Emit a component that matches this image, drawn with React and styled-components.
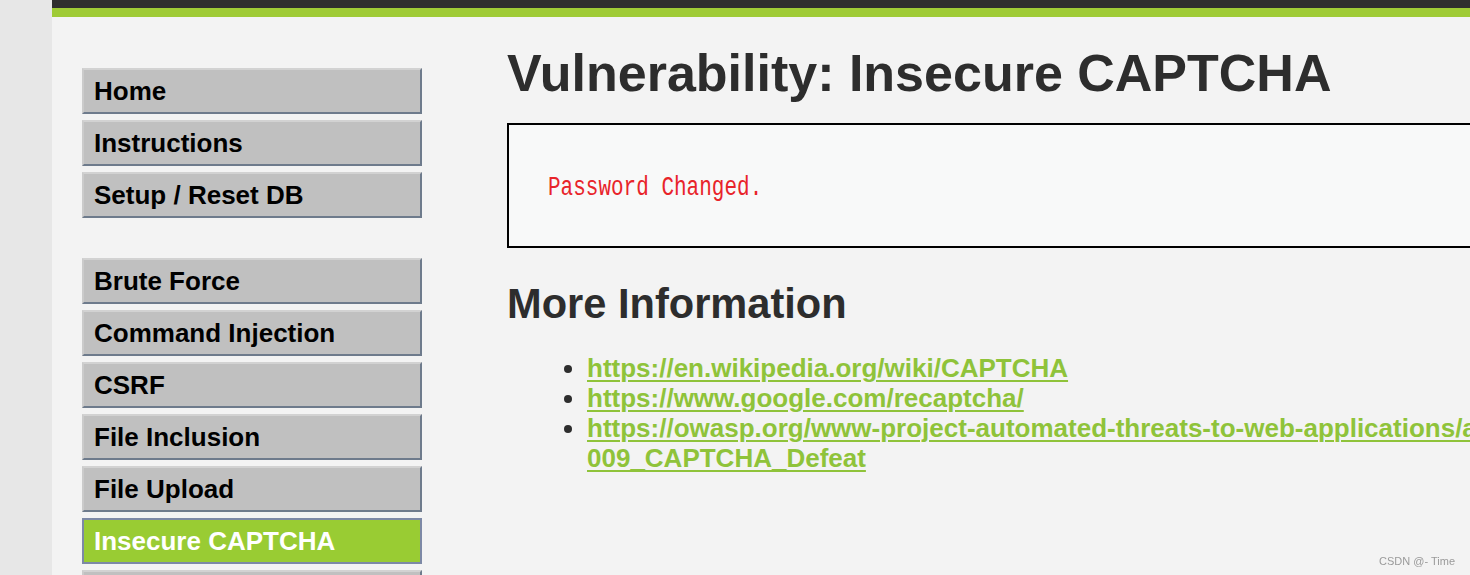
import React from 'react'
import styled, { createGlobalStyle } from 'styled-components'

const GlobalStyle = createGlobalStyle`
  html, body {
    margin: 0;
    padding: 0;
    background: #e7e7e7;
    overflow: hidden;
    font-family: "Liberation Sans", Arial, sans-serif;
  }
`

const Page = styled.div`
  padding-left: 52px;
  height: 575px;
  overflow: hidden;
`
const Container = styled.div`
  width: 1900px;
  height: 100%;
  background: #f3f3f3;
`
const HeaderBar = styled.div`
  height: 8px;
  background: #2f2e2e;
  border-bottom: 9px solid #9fcb36;
`
const Body = styled.div`
  display: flex;
  align-items: flex-start;
`
const Menu = styled.nav`
  width: 340px;
  margin: 51px 0 0 30px;
  flex-shrink: 0;
`
const MenuGroup = styled.ul`
  list-style: none;
  margin: 0 0 40px;
  padding: 0;
`
const MenuItem = styled.li`
  box-sizing: border-box;
  height: 46px;
  margin-bottom: 6px;
  padding: 6px 10px;
  font-size: 26px;
  font-weight: bold;
  line-height: 30px;
  color: ${(p) => (p.active ? '#fff' : '#000')};
  background: ${(p) => (p.active ? '#99cc33' : '#c0c0c0')};
  border: 2px solid;
  border-color: ${(p) =>
    p.active ? '#7d89a6' : '#d2d2d2 #6e7b8c #6e7b8c #cbcbcb'};
  white-space: nowrap;
`
const Main = styled.main`
  flex: 1;
  margin-left: 85px;
  margin-top: 26px;
  color: #2d2d2d;
`
const Title = styled.h1`
  margin: 0 0 20px;
  font-size: 52px;
  line-height: 60px;
  font-weight: bold;
`
const CodeArea = styled.div`
  box-sizing: border-box;
  height: 125px;
  border: 2px solid #000;
  background: #f8f9f9;
  display: flex;
  align-items: center;
  padding: 4px 39px 0;
`
const Message = styled.pre`
  margin: 0;
  color: #e8242a;
  font-family: "Liberation Mono", "Courier New", monospace;
  font-size: 21px;
  display: inline-block;
  transform: scaleY(1.3);
`
const SubTitle = styled.h2`
  margin: 32px 0 25px;
  font-size: 41.6px;
  line-height: 48px;
  font-weight: bold;
`
const LinkList = styled.ul`
  margin: 0;
  padding-left: 80px;
  font-size: 26px;
  line-height: 30px;
  white-space: nowrap;
`
const LinkItem = styled.li`
  &::marker {
    color: #2d2d2d;
  }
`
const ExtLink = styled.a`
  color: #8fc33a;
  font-weight: bold;
  text-decoration: underline;
  text-decoration-thickness: 2px;
  text-underline-offset: 3px;
`
const Watermark = styled.div`
  position: fixed;
  right: 15px;
  bottom: 8px;
  font-size: 11px;
  color: #9a9a9a;
  font-family: "Liberation Sans", Arial, sans-serif;
`

const groups = [
  ['Home', 'Instructions', 'Setup / Reset DB'],
  ['Brute Force', 'Command Injection', 'CSRF', 'File Inclusion', 'File Upload', 'Insecure CAPTCHA', 'SQL Injection'],
]

export default function App() {
  return (
    <Page>
      <GlobalStyle />
      <Container>
        <HeaderBar />
        <Body>
          <Menu>
            {groups.map((g, i) => (
              <MenuGroup key={i}>
                {g.map((item) => (
                  <MenuItem key={item} active={item === 'Insecure CAPTCHA' ? 1 : 0}>
                    {item}
                  </MenuItem>
                ))}
              </MenuGroup>
            ))}
          </Menu>
          <Main>
            <Title>Vulnerability: Insecure CAPTCHA</Title>
            <CodeArea>
              <Message>Password Changed.</Message>
            </CodeArea>
            <SubTitle>More Information</SubTitle>
            <LinkList>
              <LinkItem>
                <ExtLink href="#">https://en.wikipedia.org/wiki/CAPTCHA</ExtLink>
              </LinkItem>
              <LinkItem>
                <ExtLink href="#">https://www.google.com/recaptcha/</ExtLink>
              </LinkItem>
              <LinkItem>
                <ExtLink href="#">
                  https://owasp.org/www-project-automated-threats-to-web-applications/assets/oats/EN/OAT-
                  <br />
                  009_CAPTCHA_Defeat
                </ExtLink>
              </LinkItem>
            </LinkList>
          </Main>
        </Body>
      </Container>
      <Watermark>CSDN @- Time</Watermark>
    </Page>
  )
}
